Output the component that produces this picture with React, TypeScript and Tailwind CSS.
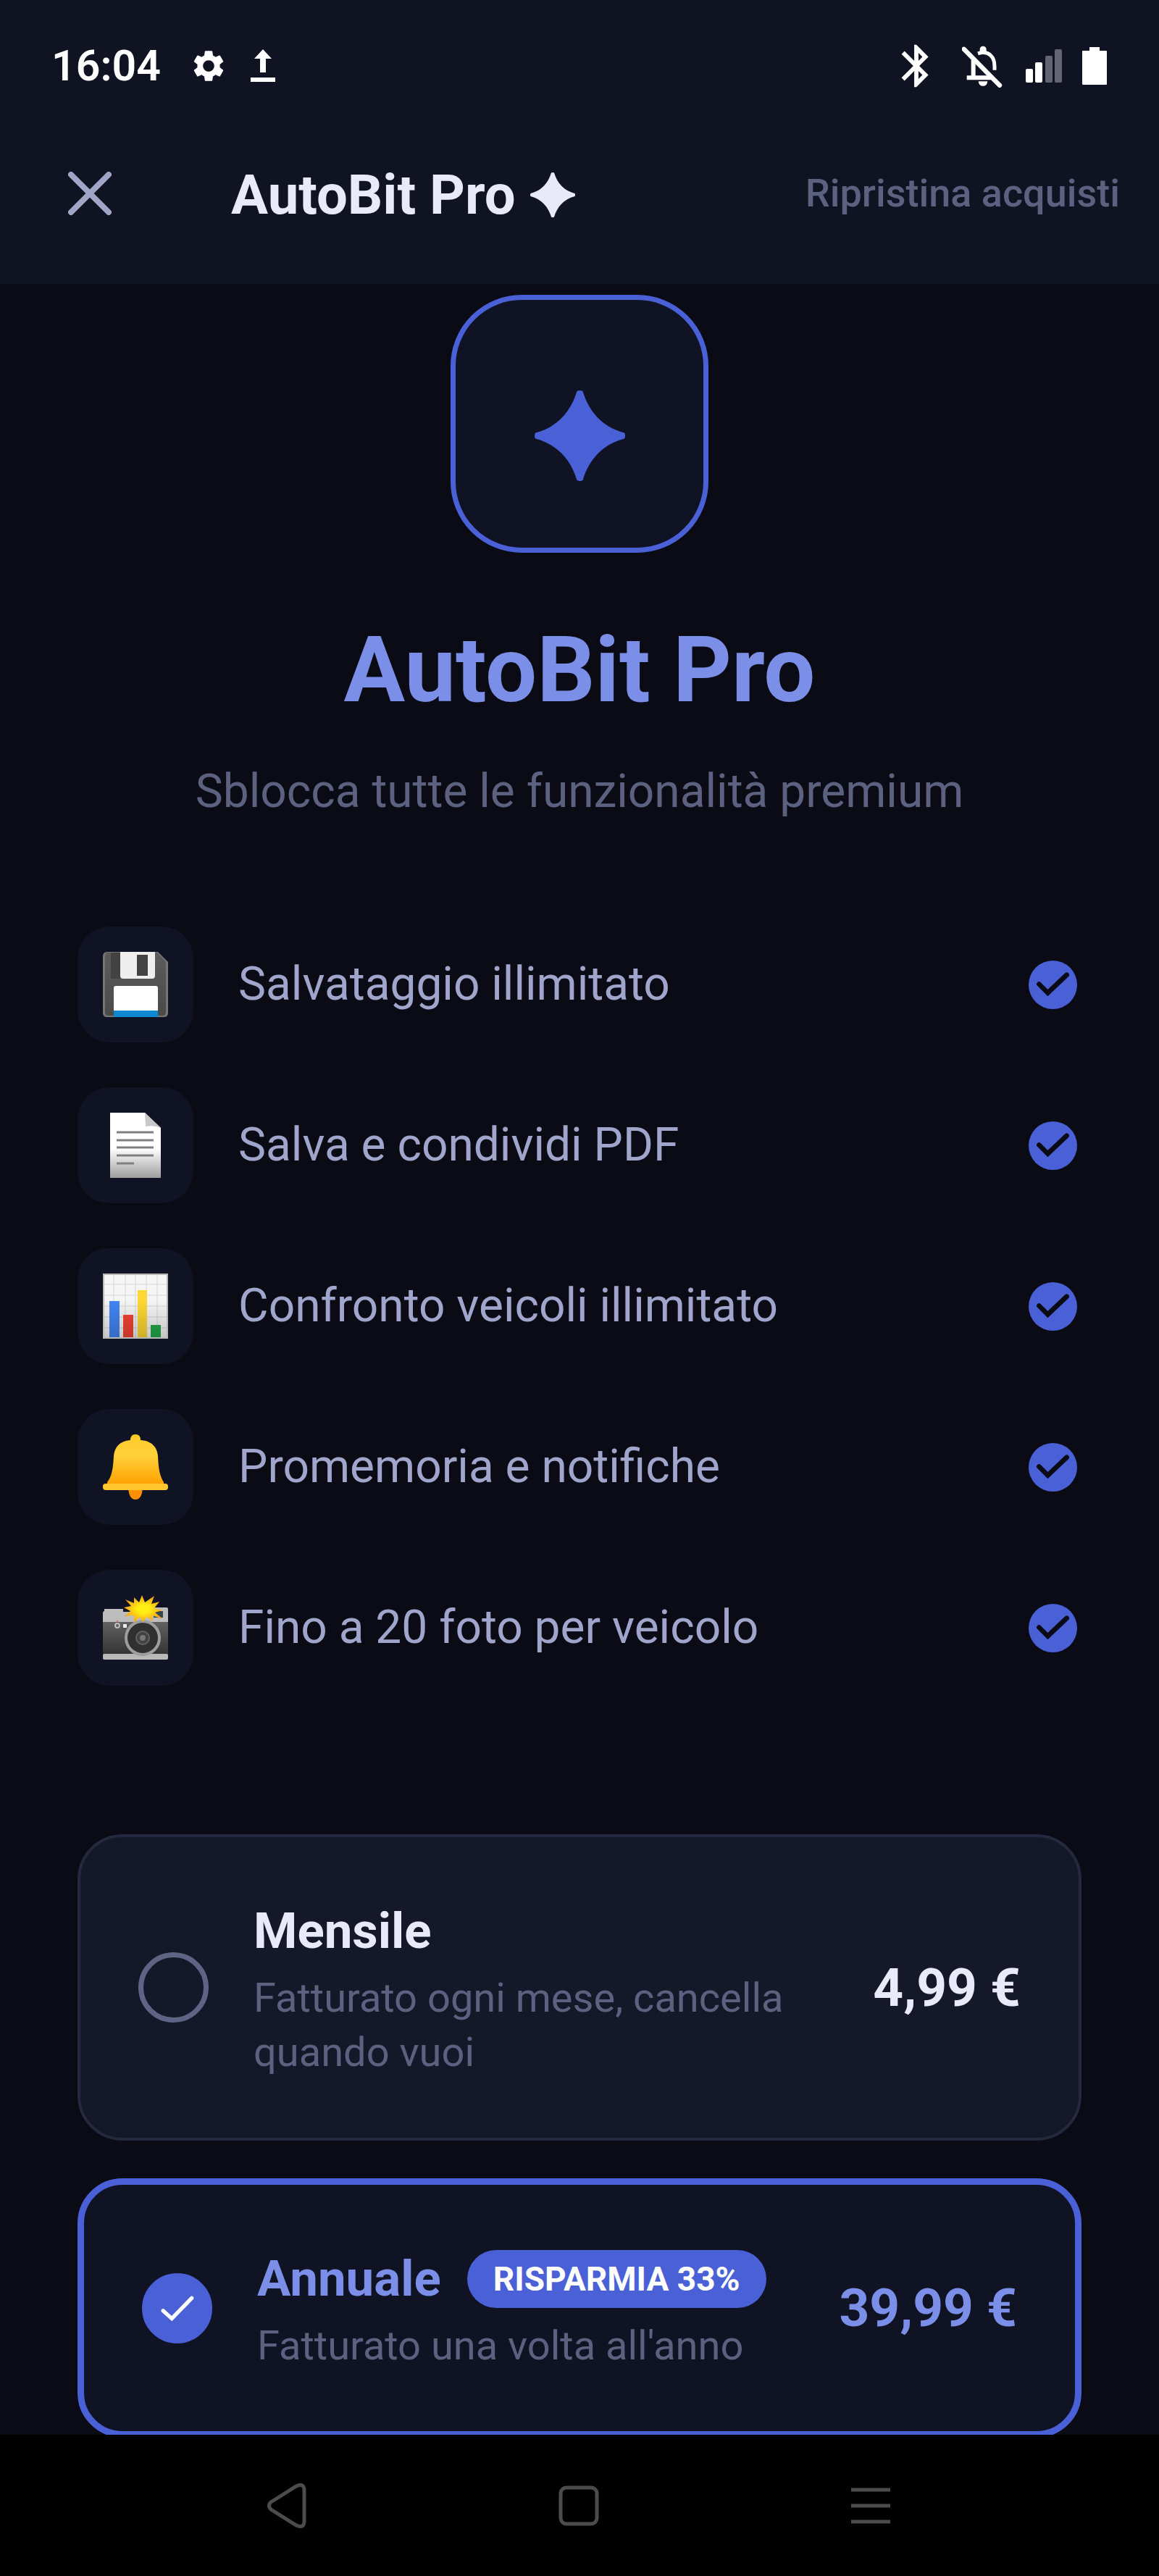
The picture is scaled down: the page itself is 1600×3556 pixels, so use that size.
import { useState } from "react";
import { MdBluetooth, MdSettings } from "react-icons/md";

type Plan = {
  id: string;
  name: string;
  badge?: string;
  description: string;
  price: string;
};

const PLANS: Plan[] = [
  { id: "monthly", name: "Mensile", description: "Fatturato ogni mese, cancella quando vuoi", price: "4,99 €" },
  {
    id: "yearly",
    name: "Annuale",
    badge: "RISPARMIA 33%",
    description: "Fatturato una volta all'anno",
    price: "39,99 €",
  },
];

const FEATURES = [
  { icon: <FloppyIcon />, label: "Salvataggio illimitato" },
  { icon: <PageIcon />, label: "Salva e condividi PDF" },
  { icon: <ChartIcon />, label: "Confronto veicoli illimitato" },
  { icon: <BellIcon />, label: "Promemoria e notifiche" },
  { icon: <CameraIcon />, label: "Fino a 20 foto per veicolo" },
];

function StarIcon({ className }: { className: string }) {
  return (
    <svg viewBox="0 0 62 62" fill="currentColor" className={className} aria-hidden="true">
      <path d="M29 0.500Q31 -0.500 33 0.500C37 14 46 25 61.500 29Q62.500 31 61.500 33C46 37 37 48 33 61.500Q31 62.500 29 61.500C25 48 16 37 0.500 33Q-0.500 31 0.500 29C16 25 25 14 29 0.500Z" />
    </svg>
  );
}

function FloppyIcon() {
  return (
    <svg viewBox="0 0 90 90" className="size-[90px]" aria-hidden="true">
      <defs>
        <linearGradient id="floppy" x1="0" y1="0" x2="0" y2="1">
          <stop offset="0" stopColor="#5c5c5c" />
          <stop offset="1" stopColor="#4a4a4a" />
        </linearGradient>
      </defs>
      <path d="M6 0H76L90 14V84Q90 90 84 90H6Q0 90 0 84V6Q0 0 6 0Z" fill="#757575" />
      <path d="M7 1H75L87 14V83Q87 88 83 88H7Q3 88 3 83V6Q3 1 7 1Z" fill="url(#floppy)" />
      <path d="M11 1H24V37H11Z" fill="#424242" />
      <path d="M24 0H72V33Q72 37 68 37H28Q24 37 24 33Z" fill="#eeeeee" />
      <path d="M47 4H62V33H47Z" fill="#424242" />
      <path d="M18 47H73Q76 47 76 50V81H15V50Q15 47 18 47Z" fill="#ffffff" />
      <path d="M15 81H76V90H15Z" fill="#0f88d2" />
    </svg>
  );
}

function PageIcon() {
  return (
    <svg viewBox="0 0 90 90" className="size-[90px]" aria-hidden="true">
      <defs>
        <linearGradient id="page" x1="0" y1="0" x2="0" y2="1">
          <stop offset="0.550" stopColor="#ffffff" />
          <stop offset="1" stopColor="#9e9e9e" />
        </linearGradient>
      </defs>
      <path d="M10 0H58L80 21V90H10Z" fill="url(#page)" />
      <path d="M58 0L80 21Q70 17 59 19Z" fill="#c8c8c8" />
      <path d="M19 27H70M19 38H70M19 48H70M19 59H70M19 70H43" stroke="#808080" strokeWidth="3" />
    </svg>
  );
}

function ChartIcon() {
  return (
    <svg viewBox="0 0 90 90" className="size-[90px]" aria-hidden="true">
      <defs>
        <linearGradient id="shade" x1="0" y1="0" x2="0" y2="1">
          <stop offset="0.400" stopColor="#000000" stopOpacity="0" />
          <stop offset="1" stopColor="#000000" stopOpacity="0.200" />
        </linearGradient>
      </defs>
      <rect width="90" height="90" fill="#f5f5f5" />
      <path d="M15 0V90M31 0V90M45 0V90M60 0V90M75 0V90M0 15H90M0 30H90M0 45H90M0 60H90M0 75H90" stroke="#d4d4d4" strokeWidth="1" />
      <rect x="9" y="38" width="14" height="52" fill="#4285f4" />
      <rect x="28" y="57" width="14" height="33" fill="#f44336" />
      <rect x="48" y="23" width="13" height="67" fill="#fdd835" />
      <rect x="66" y="71" width="14" height="19" fill="#23a94b" />
      <rect width="90" height="90" fill="url(#shade)" />
      <rect x="1" y="1" width="88" height="88" fill="none" stroke="#b8b8b8" strokeWidth="2" />
    </svg>
  );
}

function BellIcon() {
  return (
    <svg viewBox="0 0 90 90" className="size-[90px]" aria-hidden="true">
      <defs>
        <linearGradient id="bell" x1="0" y1="0" x2="0" y2="1">
          <stop offset="0" stopColor="#ffca28" />
          <stop offset="0.400" stopColor="#ffd23a" />
          <stop offset="1" stopColor="#ffa000" />
        </linearGradient>
      </defs>
      <path d="M35 70H55Q55 90 45 90T35 70Z" fill="#ff9100" />
      <path d="M38 8Q38 0 45 0T52 8C68 9 75 18 76 30C77 50 79 58 84 66V70H6V66C12 58 14 50 15 30C16 18 23 9 38 8Z" fill="url(#bell)" />
      <rect x="0" y="68" width="90" height="9" rx="4" fill="#ffc62d" />
    </svg>
  );
}

function CameraIcon() {
  return (
    <svg viewBox="0 0 90 90" className="size-[90px]" aria-hidden="true">
      <defs>
        <linearGradient id="camera" x1="0" y1="0" x2="0" y2="1">
          <stop offset="0" stopColor="#616161" />
          <stop offset="1" stopColor="#333333" />
        </linearGradient>
        <radialGradient id="flash">
          <stop offset="0.300" stopColor="#ffee12" />
          <stop offset="1" stopColor="#f9a01b" />
        </radialGradient>
      </defs>
      <path d="M2 19H28V23H42V17H88Q90 17 90 19V40H0V25Q0 22 2 22Z" fill="#bdbdbd" />
      <rect x="70" y="22" width="13" height="9" fill="#37474f" />
      <rect y="37" width="90" height="45" fill="url(#camera)" />
      <rect y="81" width="90" height="8" rx="2" fill="#b8b8b8" />
      <rect x="28" y="40" width="5" height="5" fill="#eeeeee" />
      <circle cx="20" cy="42" r="3" fill="#616161" stroke="#bdbdbd" strokeWidth="2" />
      <circle cx="20" cy="36" r="1" fill="#f44336" />
      <circle cx="55" cy="59" r="23" fill="#303030" stroke="#9e9e9e" strokeWidth="4" />
      <circle cx="55" cy="59" r="9" fill="#424242" stroke="#616161" strokeWidth="2" />
      <circle cx="55" cy="59" r="4" fill="#757575" />
      <path d="M54 0L58 10L71 1L67 12L78 9L71 18L82 21L72 24L83 33L68 28L69 36L61 30L55 37L51 30L43 38L43 28L30 29L38 22L29 17L39 15L31 6L43 11L43 3L50 10Z" fill="url(#flash)" />
    </svg>
  );
}

function StatusBar() {
  return (
    <div className="flex items-center justify-between pt-10 pl-[71px] pr-[72px] h-[142px] text-white">
      <div className="flex items-center">
        <span className="text-[59px] leading-[68px] font-semibold">16:04</span>
        <MdSettings className="size-[52px] ml-10" />
        <svg viewBox="0 0 34 46" fill="currentColor" className="w-[34px] h-[46px] ml-8" aria-hidden="true">
          <path d="M17 0L29 13H21V32H13V13H5ZM0 39H34V45H0Z" />
        </svg>
      </div>
      <div className="flex items-center">
        <MdBluetooth className="size-[70px]" />
        <svg viewBox="318 62 168 176" fill="none" stroke="currentColor" className="w-14 h-[59px] ml-7" aria-hidden="true">
          <path d="M326 79L474 229" strokeWidth="19" strokeLinecap="round" />
          <path d="M365 124V197M338 197H438" strokeWidth="18" />
          <path d="M384 97C430 82 453 112 453 150V166" strokeWidth="15" />
          <path d="M392 90V78Q394 67 405 67T419 78V90Z" fill="currentColor" stroke="none" />
          <path d="M386 212H424Q422 232 405 232T386 212Z" fill="currentColor" stroke="none" />
        </svg>
        <svg viewBox="0 0 50 46" fill="currentColor" className="w-[50px] h-[46px] ml-8" aria-hidden="true">
          <rect y="27" width="10" height="19" rx="2" />
          <rect x="13" y="18" width="10" height="28" rx="2" />
          <rect x="27" y="9" width="10" height="37" rx="2" opacity="0.350" />
          <rect x="40" width="10" height="46" rx="2" opacity="0.350" />
        </svg>
        <svg viewBox="0 0 34 52" fill="currentColor" className="w-[34px] h-[52px] ml-7" aria-hidden="true">
          <path d="M10 0H24V5H33Q34 5 34 6V51Q34 52 33 52H1Q0 52 0 51V6Q0 5 1 5H10Z" />
        </svg>
      </div>
    </div>
  );
}

function PlanCard({ plan, selected, onSelect }: { plan: Plan; selected: boolean; onSelect: () => void }) {
  return (
    <label
      className={
        selected
          ? "flex items-center gap-[62px] p-20 rounded-[62px] border-[9px] border-[#4a60d6] bg-[#0f1324] cursor-pointer"
          : "flex items-center gap-[62px] p-20 rounded-[62px] border-4 border-[#242940] bg-[#141828] cursor-pointer"
      }
    >
      <span className="grid shrink-0 place-items-center">
        <input
          type="radio"
          name="plan"
          value={plan.id}
          checked={selected}
          onChange={onSelect}
          className="col-start-1 row-start-1 appearance-none size-[97px] rounded-full border-[7px] border-[#5f6484] checked:border-[#4a60d6] checked:bg-[#4a60d6]"
        />
        {selected && (
          <svg viewBox="0 0 24 24" className="col-start-1 row-start-1 size-[97px] pointer-events-none" aria-hidden="true">
            <path d="M7.200 12.800L10.200 15.500L17 8.500" fill="none" stroke="#ffffff" strokeWidth="1.300" strokeLinecap="round" />
          </svg>
        )}
      </span>
      <span className="flex-1">
        <span className="flex items-center gap-9">
          <span className={selected ? "text-[69px] leading-[100px] font-bold text-[#7b8fe8]" : "text-[69px] leading-[100px] font-bold text-[#e8eafa]"}>
            {plan.name}
          </span>
          {plan.badge && (
            <span className="px-9 py-3 rounded-full bg-[#4a60d6] text-[46px] leading-[56px] font-bold whitespace-nowrap text-white">
              {plan.badge}
            </span>
          )}
        </span>
        <span className="block mt-[5px] text-[56px] leading-[75px] text-[#5c6180]">{plan.description}</span>
      </span>
      <span className={selected ? "text-[73px] leading-[84px] font-bold whitespace-nowrap text-[#7b8fe8]" : "text-[73px] leading-[84px] font-bold whitespace-nowrap text-[#e8eafa]"}>
        {plan.price}
      </span>
    </label>
  );
}

export default function App() {
  const [planId, setPlanId] = useState("yearly");

  return (
    <div className="flex flex-col h-screen bg-[#0a0b14] font-[Roboto,sans-serif]">
      <header className="shrink-0 bg-[#0f1322]">
        <StatusBar />
        <div className="flex items-center h-[250px] pl-[94px] pr-[54px]">
          <button type="button" aria-label="Chiudi" className="text-[#a0a5c8]">
            <svg viewBox="0 0 60 60" className="size-[60px]" aria-hidden="true">
              <path d="M4 4L56 56M56 4L4 56" stroke="currentColor" strokeWidth="8" strokeLinecap="round" />
            </svg>
          </button>
          <h1 className="flex items-center gap-5 ml-[165px] pt-1 text-[76px] leading-[90px] font-bold text-[#e8eafa]">
            AutoBit Pro
            <StarIcon className="size-[62px]" />
          </h1>
          <button type="button" className="ml-auto text-[54px] leading-[64px] font-medium text-[#5c6180]">
            Ripristina acquisti
          </button>
        </div>
      </header>

      <main className="flex-1 min-h-0 overflow-y-auto [scrollbar-width:none] px-[107px] pt-[15px]">
        <section className="flex flex-col items-center">
          <div className="grid place-items-center size-[356px] pt-8 rounded-[98px] border-[7px] border-[#4a60d6] bg-[#0f1324] text-[#4a60d6]">
            <StarIcon className="size-[125px]" />
          </div>
          <h2 className="mt-[88px] text-[126px] leading-[148px] font-bold text-[#7b8fe8]">AutoBit Pro</h2>
          <p className="mt-[50px] text-[64px] leading-[88px] text-[#5c6180]">Sblocca tutte le funzionalità premium</p>
        </section>

        <ul className="flex flex-col gap-[62px] mt-[142px]">
          {FEATURES.map((f) => (
            <li key={f.label} className="flex items-center">
              <span className="grid place-items-center size-40 rounded-[44px] bg-[#0f1324]">{f.icon}</span>
              <span className="flex-1 ml-[62px] text-[64px] leading-[88px] text-[#a0a5cc]">{f.label}</span>
              <svg viewBox="0 0 20 20" className="size-[67px] mr-1.5" aria-hidden="true">
                <circle cx="10" cy="10" r="10" fill="#4a60d6" />
                <path d="M4.300 9.700L7.900 13.300L15.700 5.900" fill="none" stroke="#0a0b14" strokeWidth="2" strokeLinecap="round" />
              </svg>
            </li>
          ))}
        </ul>

        <div role="radiogroup" aria-label="Piano" className="flex flex-col gap-[52px] mt-[205px]">
          {PLANS.map((p) => (
            <PlanCard key={p.id} plan={p} selected={p.id === planId} onSelect={() => setPlanId(p.id)} />
          ))}
        </div>
      </main>

      <nav className="flex shrink-0 items-center justify-between h-[195px] pl-[369px] pr-[371px] bg-black text-[#4c4c4c]">
        <button type="button" aria-label="Indietro">
          <svg viewBox="0 0 54 62" fill="none" stroke="currentColor" strokeWidth="5" className="w-[54px] h-[62px]" aria-hidden="true">
            <path d="M5 26L40 4Q51 -1 51 10V52Q51 63 40 58L5 36Q0 31 5 26Z" />
          </svg>
        </button>
        <button type="button" aria-label="Home">
          <svg viewBox="0 0 56 56" fill="none" stroke="currentColor" strokeWidth="5" className="size-14" aria-hidden="true">
            <rect x="3" y="3" width="50" height="50" rx="8" />
          </svg>
        </button>
        <button type="button" aria-label="App recenti">
          <svg viewBox="0 0 54 50" stroke="currentColor" strokeWidth="5" className="w-[54px] h-[50px]" aria-hidden="true">
            <path d="M0 3H54M0 25H54M0 47H54" />
          </svg>
        </button>
      </nav>
    </div>
  );
}
